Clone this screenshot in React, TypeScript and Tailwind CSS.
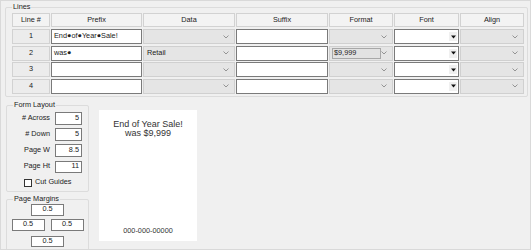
import type { ReactNode } from 'react';

const COLS = 'grid grid-cols-[38px_91px_92px_92px_64px_65px_64px] gap-x-[1px]';

const rows = [
  { n: 1, prefix: 'End●of●Year●Sale!', data: '', format: '' },
  { n: 2, prefix: 'was●', data: 'Retail', format: '$9,999' },
  { n: 3, prefix: '', data: '', format: '' },
  { n: 4, prefix: '', data: '', format: '' },
];

function Chevron() {
  return (
    <svg width="6" height="4" viewBox="0 0 6 4" className="shrink-0">
      <path d="M0.5 0.5 L3 3 L5.5 0.5" fill="none" stroke="#8a8a8a" strokeWidth="0.9" />
    </svg>
  );
}

function GrayCombo({ children }: { children?: ReactNode }) {
  return (
    <div className="flex items-center h-full bg-[#e5e5e5] border border-[#d0d0d0] pl-[2px] pr-[5px]">
      <div className="flex-1 min-w-0 flex items-center h-full">{children}</div>
      <Chevron />
    </div>
  );
}

function FontCombo() {
  return (
    <div className="flex items-stretch h-full bg-white border border-[#7a7a7a]">
      <div className="flex-1" />
      <div className="w-[8px] my-[2px] mr-[1px] flex items-center justify-center bg-[#f0f0f0]">
        <svg width="5" height="4" viewBox="0 0 5 4">
          <path d="M0 0.5 H5 L2.5 3.5 Z" fill="#111" />
        </svg>
      </div>
    </div>
  );
}

function Group({ label, className, children }: { label: string; className: string; children: ReactNode }) {
  return (
    <div className={`relative border border-[#dcdcdc] rounded-[2px] ${className}`}>
      <span className="absolute left-[6px] top-[-6px] px-[1px] bg-[#f0f0f0] leading-[9px] text-[7.3px] text-[#222]">
        {label}
      </span>
      {children}
    </div>
  );
}

function SmallInput({ value, align = 'right', w = 'w-[27px]', h = 'h-[12.5px]' }: { value: string; align?: 'right' | 'center'; w?: string; h?: string }) {
  return (
    <div
      className={`${w} ${h} bg-white border border-[#7a7a7a] flex items-center px-[2px] text-[7.3px] text-[#222] ${
        align === 'right' ? 'justify-end' : 'justify-center'
      }`}
    >
      {value}
    </div>
  );
}

export default function App() {
  return (
    <div className="w-[531px] h-[250px] overflow-hidden bg-[#f0f0f0] border border-[#d9d9d9] font-['Liberation_Sans',Arial,sans-serif] text-[7.3px] text-[#222]">
      <Group label="Lines" className="mt-[6px] ml-[4px] w-[523px] h-[90px] pt-[5px] pl-[6px]">
        <div className={`${COLS} h-[14px]`}>
          {['Line #', 'Prefix', 'Data', 'Suffix', 'Format', 'Font', 'Align'].map((h) => (
            <div key={h} className="flex items-center justify-center bg-[#f3f3f3] border border-[#d2d2d2]">
              {h}
            </div>
          ))}
        </div>
        <div className="flex flex-col gap-[1.6px] mt-[2px]">
          {rows.map((r) => (
            <div key={r.n} className={`${COLS} h-[15px]`}>
              <div className="flex items-center justify-center bg-[#ececec] border border-[#d2d2d2]">{r.n}</div>
              <div className="flex items-center bg-white border border-[#7a7a7a] pl-[2px] whitespace-nowrap">{r.prefix}</div>
              <GrayCombo>{r.data && <span className="pl-[1px]">{r.data}</span>}</GrayCombo>
              <div className="bg-white border border-[#7a7a7a]" />
              <GrayCombo>
                {r.format && (
                  <div className="w-[51px] h-[11px] flex items-center bg-[#e2e2e2] border border-[#a8a8a8] pl-[1px]">
                    {r.format}
                  </div>
                )}
              </GrayCombo>
              <FontCombo />
              <GrayCombo />
            </div>
          ))}
        </div>
      </Group>

      <div className="flex">
        <div className="flex flex-col">
          <Group label="Form Layout" className="mt-[8px] ml-[5px] w-[83px] h-[87px] pt-[6px]">
            <div className="flex flex-col gap-[3.7px]">
              {[
                ['# Across', '5'],
                ['# Down', '5'],
                ['Page W', '8.5'],
                ['Page Ht', '11'],
              ].map(([l, v]) => (
                <div key={l} className="flex items-center">
                  <span className="w-[43px] text-right">{l}</span>
                  <span className="w-[5px]" />
                  <SmallInput value={v} />
                </div>
              ))}
            </div>
            <div className="flex items-center mt-[4px] ml-[17px] gap-[3px]">
              <div className="w-[8px] h-[8px] bg-white border border-[#333]" />
              <span>Cut Guides</span>
            </div>
          </Group>
          <Group label="Page Margins" className="mt-[7px] ml-[5px] w-[83px] h-[52px] pt-[4px]">
            <div className="flex flex-col items-center">
              <SmallInput value="0.5" align="center" w="w-[33px]" h="h-[11.5px]" />
              <div className="flex gap-[6px] mt-[3.5px]">
                <SmallInput value="0.5" align="center" w="w-[33px]" h="h-[11.5px]" />
                <SmallInput value="0.5" align="center" w="w-[33px]" h="h-[11.5px]" />
              </div>
              <div className="mt-[5px]">
                <SmallInput value="0.5" align="center" w="w-[33px]" h="h-[11.5px]" />
              </div>
            </div>
          </Group>
        </div>

        <div className="ml-[10px] mt-[13px] w-[98px] h-[131px] bg-white flex flex-col items-center pt-[10px] pb-[6px] text-[#333]">
          <div className="text-[9px] leading-[9px]">End of Year Sale!</div>
          <div className="text-[9px] leading-[9px]">was $9,999</div>
          <div className="flex-1" />
          <div className="text-[7.3px] leading-[9px]">000-000-00000</div>
        </div>
      </div>
    </div>
  );
}
